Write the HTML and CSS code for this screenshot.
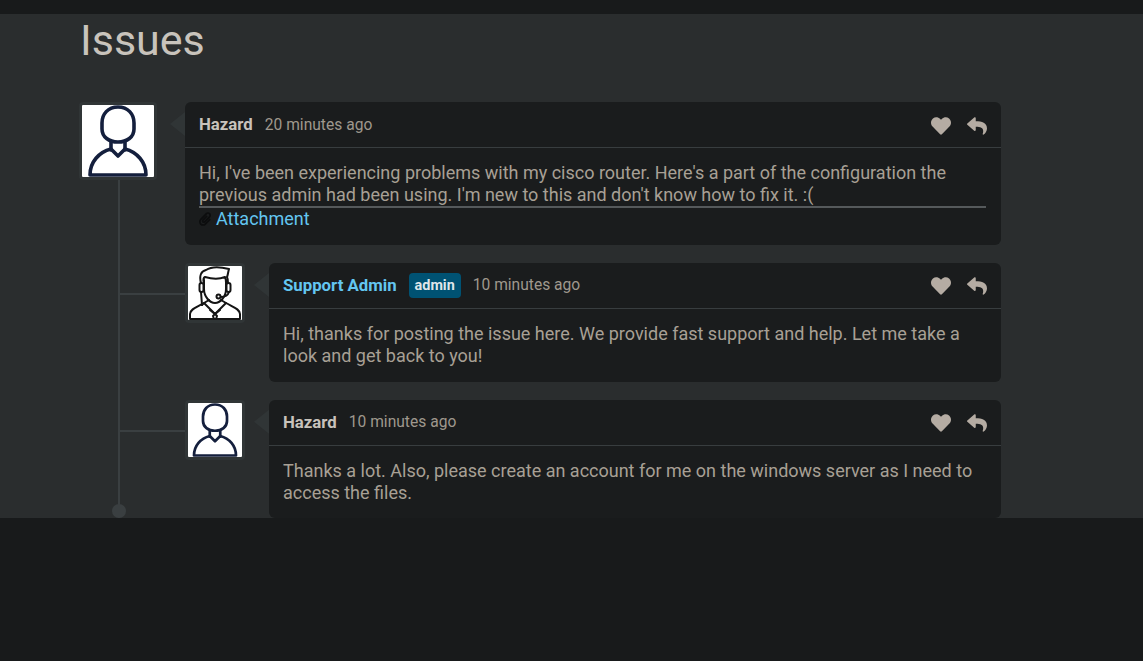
FILE: index.html
```html
<!DOCTYPE html>
<html lang="en">
<head>
<meta charset="utf-8">
<title>Issues</title>
<link rel="stylesheet" href="styles.css">
</head>
<body>
<svg class="sprite" width="0" height="0" aria-hidden="true">
  <symbol id="i-heart" viewBox="0 0 512 512"><path d="M462.3 62.6C407.5 15.9 326 24.3 275.7 76.2L256 96.5l-19.7-20.3C186.1 24.3 104.5 15.9 49.7 62.6c-62.8 53.6-66.1 149.8-9.9 207.9l193.5 199.8c12.5 12.9 32.8 12.9 45.3 0l193.5-199.8c56.3-58.1 53-154.3-9.8-207.9z"/></symbol>
  <symbol id="i-reply" viewBox="0 0 512 512"><path d="M8.309 189.836L184.313 37.851C199.719 24.546 224 35.347 224 56.015v80.053c160.629 1.839 288 34.032 288 186.258 0 61.441-39.581 122.309-83.333 154.132-13.653 9.931-33.111-2.533-28.077-18.631 45.344-145.012-21.507-183.51-176.59-185.742V360c0 20.7-24.3 31.453-39.687 18.164l-176.004-152c-11.071-9.562-11.086-26.753 0-36.328z"/></symbol>
  <symbol id="i-person" viewBox="0 0 72 72"><g fill="none" stroke="#141f3d" stroke-width="3.600" stroke-linejoin="round" stroke-linecap="round"><path d="M36 2C46 2 52 9 52 18V24C52 32 45 37 36 37C27 37 20 32 20 24V18C20 9 26 2 36 2Z"/><path d="M29 37V45M43 37V45"/><path d="M8 70C8 57 17 47 29 44L36 51L43 44C55 47 64 57 64 70Z"/></g></symbol>
  <symbol id="i-agent" viewBox="0 0 54 54"><g fill="none" stroke="#141414" stroke-width="2" stroke-linejoin="round" stroke-linecap="round"><path d="M13 17C11 10 13 5 18 4C24 0 33 1 41 3C40 6 40 9 39 11C40 13 40 15 40 17"/><path d="M16 17C15 14 15 12 17 11C24 13 32 13 37 11C38 13 38 15 38 17"/><path d="M16 14V23C16 31 22 37 27 37C32 37 38 31 38 23V14"/><rect x="11.500" y="17" width="4" height="9" rx="2"/><rect x="38.500" y="17" width="4" height="9" rx="2"/><path d="M41 26C40 29 37 31 33 31"/><circle cx="30.500" cy="30.500" r="2"/><path d="M13 26L14 39"/><path d="M2 53V48C2 43 9 41 16 37L27 48L38 37C45 41 52 43 52 48V53Z"/><path d="M16 37L21 34M38 37L33 34M16 37L14 39M27 48L22 44M27 48L32 44"/><path d="M27 48L25 50L26 53M27 48L29 50L28 53"/></g></symbol>
</svg>
<div class="topbar"></div>
<main class="section">
  <h1 class="title">Issues</h1>
  <div class="thread">
    <article class="comment">
      <div class="avatar avatar-main"><svg class="avatar-img"><use href="#i-person"/></svg></div>
      <div class="card">
        <header class="card-head">
          <div class="who"><span class="name">Hazard</span><span class="time">20 minutes ago</span></div>
          <div class="actions"><svg class="icon-heart"><use href="#i-heart"/></svg><svg class="icon-reply"><use href="#i-reply"/></svg></div>
        </header>
        <div class="card-body">
          <p class="text">Hi, I've been experiencing problems with my cisco router. Here's a part of the configuration the previous admin had been using. I'm new to this and don't know how to fix it. :(</p>
          <hr class="rule">
          <div class="attach">
            <svg class="icon-clip" viewBox="0 0 448 512"><path d="M43.246 466.142c-58.43-60.289-57.341-157.511 1.386-217.581L254.392 34c44.316-45.332 116.351-45.336 160.671 0 43.89 44.894 43.943 117.329 0 162.276L232.214 383.128c-29.855 30.537-78.633 30.111-107.982-.998-28.275-29.97-27.368-77.473 1.452-106.953l143.743-146.835c6.182-6.314 16.312-6.422 22.626-.241l22.861 22.379c6.315 6.182 6.422 16.312.241 22.626L171.427 319.927c-4.932 5.045-5.236 13.428-.648 18.292 4.372 4.634 11.245 4.711 15.688.165l182.849-186.851c19.613-20.062 19.613-52.725-.011-72.798-19.189-19.627-49.957-19.637-69.154 0L90.39 293.295c-34.763 35.56-35.299 93.12-1.191 128.313 34.01 35.093 88.985 35.137 123.058.286l172.06-175.999c6.177-6.319 16.307-6.433 22.626-.256l22.877 22.364c6.319 6.177 6.434 16.307.256 22.626l-172.06 175.998c-59.576 60.938-155.943 60.216-214.77-.485z"/></svg>
            <a class="link" href="#">Attachment</a>
          </div>
        </div>
      </div>
    </article>
    <article class="comment reply">
      <div class="avatar avatar-small"><svg class="avatar-img"><use href="#i-agent"/></svg></div>
      <div class="card">
        <header class="card-head">
          <div class="who"><span class="name name-admin">Support Admin</span><span class="badge">admin</span><span class="time">10 minutes ago</span></div>
          <div class="actions"><svg class="icon-heart"><use href="#i-heart"/></svg><svg class="icon-reply"><use href="#i-reply"/></svg></div>
        </header>
        <div class="card-body">
          <p class="text">Hi, thanks for posting the issue here. We provide fast support and help. Let me take a look and get back to you!</p>
        </div>
      </div>
    </article>
    <article class="comment reply">
      <div class="avatar avatar-small"><svg class="avatar-img"><use href="#i-person"/></svg></div>
      <div class="card">
        <header class="card-head">
          <div class="who"><span class="name">Hazard</span><span class="time">10 minutes ago</span></div>
          <div class="actions"><svg class="icon-heart"><use href="#i-heart"/></svg><svg class="icon-reply"><use href="#i-reply"/></svg></div>
        </header>
        <div class="card-body">
          <p class="text">Thanks a lot. Also, please create an account for me on the windows server as I need to access the files.</p>
        </div>
      </div>
    </article>
  </div>
</main>
</body>
</html>
```
FILE: styles.css
```css
* { box-sizing: border-box; }
html, body { margin: 0; height: 100%; overflow: hidden; }
body {
  background: #181a1b;
  font-family: Roboto, "Liberation Sans", sans-serif;
  color: #a8a095;
}
.sprite { position: absolute; }
.topbar { height: 14px; background: #181a1b; }
.section { background: #2a2d2e; padding: 0 80px; }
.title {
  margin: 0;
  height: 88.05px;
  padding-top: 2px;
  font-size: 43px;
  line-height: 48px;
  font-weight: 400;
  color: #c8c3bc;
}
.thread {
  position: relative;
  width: 921px;
  display: flex;
  flex-direction: column;
  gap: 18.3px;
}
.thread::before {
  content: "";
  position: absolute;
  left: 38px;
  top: 78px;
  bottom: 7px;
  width: 2px;
  background: #3a3f41;
}
.thread::after {
  content: "";
  position: absolute;
  left: 32px;
  bottom: 0;
  width: 14px;
  height: 14px;
  border-radius: 50%;
  background: #3a3f41;
}
.comment { display: flex; align-items: flex-start; }
.reply { padding-left: 105px; }
.avatar {
  position: relative;
  flex: none;
  padding: 3px;
  background: #303536;
  border-radius: 4px;
  line-height: 0;
}
.avatar-main { width: 78px; height: 78px; margin-left: -1px; margin-right: 28px; }
.avatar-small { width: 60px; height: 60px; margin-right: 24px; }
.avatar-small::before {
  content: "";
  position: absolute;
  right: 100%;
  top: 30px;
  width: 66px;
  height: 2px;
  background: #3a3f41;
}
.avatar-img { width: 100%; height: 100%; background: #fff; display: block; border-radius: 1px; }
.card {
  position: relative;
  flex: 1;
  min-width: 0;
  background: #1a1c1d;
  border-radius: 6px;
}
.card::before {
  content: "";
  position: absolute;
  left: -15px;
  top: 10px;
  width: 15px;
  height: 24px;
  background: #303536;
  clip-path: polygon(100% 0, 0 50%, 100% 100%);
}
.card-head {
  display: flex;
  align-items: center;
  justify-content: space-between;
  height: 46px;
  padding: 0 14px;
  border-bottom: 1px solid #383d3f;
}
.who { display: flex; align-items: center; line-height: 24px; }
.name { margin-bottom: 0.5px; font-size: 16.8px; font-weight: 700; color: #c8c3bc; }
.name-admin { color: #63c6f1; }
.badge {
  margin-left: 12px;
  padding: 0 6px;
  height: 25px;
  line-height: 25px;
  background: #005273;
  border-radius: 4px;
  font-size: 14.4px;
  font-weight: 700;
  color: #dfe6ea;
}
.time { margin-left: 12px; font-size: 15.6px; color: #9f988d; }
.actions { display: flex; align-items: center; gap: 16px; padding-top: 2px; fill: #b5aca3; }
.icon-heart { width: 20px; height: 20px; display: block; }
.icon-reply { width: 20px; height: 20px; display: block; }
.card-body { padding: 14px 14px 14.6px; font-size: 18px; line-height: 22px; }
.text { margin: 0; }
.rule { margin: 0 1px 0 0; border: 0; height: 2px; background: #55595b; }
.attach { display: flex; align-items: center; gap: 5px; height: 22px; }
.icon-clip { width: 12px; height: 14px; fill: #0c0d0e; }
.link { color: #63c6f1; text-decoration: none; }
```
